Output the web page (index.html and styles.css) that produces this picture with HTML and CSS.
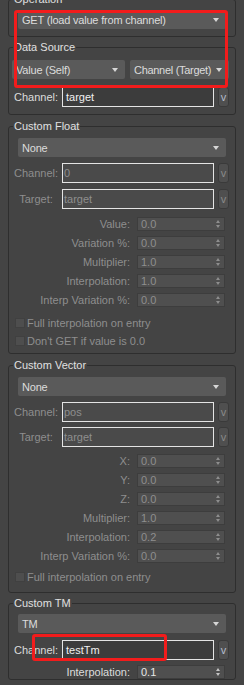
FILE: index.html
```html
<!DOCTYPE html>
<html>
<head>
    <title>Channel Operator</title>
    <link rel="stylesheet" href="styles.css">
</head>
<body>
    <div class="panel">
        <div class="group group-operation">
            <div class="group-title">Operation</div>
            <div class="dropdown wide"><span>GET (load value from channel)</span><i class="arrow"></i></div>
        </div>

        <div class="group group-source">
            <div class="group-title">Data Source</div>
            <div class="source-row">
                <div class="dropdown source-self"><span>Value (Self)</span><i class="arrow"></i></div>
                <div class="dropdown source-target"><span>Channel (Target)</span><i class="arrow"></i></div>
            </div>
            <div class="field-row">
                <label>Channel:</label>
                <div class="text-input">target</div>
                <button class="pick">v</button>
            </div>
        </div>

        <div class="group group-float">
            <div class="group-title">Custom Float</div>
            <div class="dropdown wide"><span>None</span><i class="arrow"></i></div>
            <div class="field-row disabled">
                <label>Channel:</label>
                <div class="text-input">0</div>
                <button class="pick">v</button>
            </div>
            <div class="field-row disabled">
                <label>Target:</label>
                <div class="text-input">target</div>
                <button class="pick">v</button>
            </div>
            <div class="spinners disabled">
                <div class="spin-row"><label>Value:</label><div class="spinner"><span>0.0</span><i class="updown"></i></div></div>
                <div class="spin-row"><label>Variation %:</label><div class="spinner"><span>0.0</span><i class="updown"></i></div></div>
                <div class="spin-row"><label>Multiplier:</label><div class="spinner"><span>1.0</span><i class="updown"></i></div></div>
                <div class="spin-row"><label>Interpolation:</label><div class="spinner"><span>1.0</span><i class="updown"></i></div></div>
                <div class="spin-row"><label>Interp Variation %:</label><div class="spinner"><span>0.0</span><i class="updown"></i></div></div>
            </div>
            <div class="checks disabled">
                <div class="check-row"><span class="box"></span>Full interpolation on entry</div>
                <div class="check-row"><span class="box"></span>Don't GET if value is 0.0</div>
            </div>
        </div>

        <div class="group group-vector">
            <div class="group-title">Custom Vector</div>
            <div class="dropdown wide"><span>None</span><i class="arrow"></i></div>
            <div class="field-row disabled">
                <label>Channel:</label>
                <div class="text-input">pos</div>
                <button class="pick">v</button>
            </div>
            <div class="field-row disabled">
                <label>Target:</label>
                <div class="text-input">target</div>
                <button class="pick">v</button>
            </div>
            <div class="spinners disabled">
                <div class="spin-row"><label>X:</label><div class="spinner"><span>0.0</span><i class="updown"></i></div></div>
                <div class="spin-row"><label>Y:</label><div class="spinner"><span>0.0</span><i class="updown"></i></div></div>
                <div class="spin-row"><label>Z:</label><div class="spinner"><span>0.0</span><i class="updown"></i></div></div>
                <div class="spin-row"><label>Multiplier:</label><div class="spinner"><span>1.0</span><i class="updown"></i></div></div>
                <div class="spin-row"><label>Interpolation:</label><div class="spinner"><span>0.2</span><i class="updown"></i></div></div>
                <div class="spin-row"><label>Interp Variation %:</label><div class="spinner"><span>0.0</span><i class="updown"></i></div></div>
            </div>
            <div class="checks disabled">
                <div class="check-row"><span class="box"></span>Full interpolation on entry</div>
            </div>
        </div>

        <div class="group group-tm">
            <div class="group-title">Custom TM</div>
            <div class="dropdown wide"><span>TM</span><i class="arrow"></i></div>
            <div class="field-row">
                <label>Channel:</label>
                <div class="text-input">testTm</div>
                <button class="pick">v</button>
            </div>
            <div class="spinners">
                <div class="spin-row"><label>Interpolation:</label><div class="spinner"><span>0.1</span><i class="updown"></i></div></div>
            </div>
        </div>
    </div>

    <div class="highlight highlight-source"></div>
    <div class="highlight highlight-channel"></div>
</body>
</html>
```

FILE: styles.css
```css
html, body {
    margin: 0;
    height: 685px;
    overflow: hidden;
}
body {
    background-color: #444444;
    color: #dcdcdc;
    font-family: "Liberation Sans", Arial, sans-serif;
    font-size: 11px;
    line-height: 14px;
}
.panel {
    padding: 0 8px;
    margin-top: -1px;
}
.group {
    border: 1px solid #2e2e2e;
    border-radius: 3px;
    margin-bottom: 11px;
}
.group-title {
    display: table;
    margin: -8px 0 0 4px;
    padding: 0 1px;
    background-color: #444444;
    color: #e0e0e0;
}

/* dropdowns */
.dropdown {
    display: flex;
    align-items: center;
    height: 19px;
    padding: 0 7px 0 4px;
    background-color: #5a5a5a;
    border-radius: 2px;
    white-space: nowrap;
    letter-spacing: -0.2px;
}
.dropdown.wide {
    margin: 5px 9px 0 9px;
}
.arrow {
    margin-left: auto;
    width: 0;
    height: 0;
    border-left: 3px solid transparent;
    border-right: 3px solid transparent;
    border-top: 4px solid #d6d6d6;
}
.source-row {
    display: flex;
    gap: 5px;
    padding: 0 6px 0 3px;
    margin-top: 6px;
}
.source-self {
    width: 102px;
}
.source-target {
    flex: 1;
    letter-spacing: -0.3px;
}

/* channel / target rows */
.field-row {
    display: flex;
    align-items: center;
    height: 20px;
    margin-top: 6px;
}
.field-row label {
    width: 52px;
    margin-left: 1px;
    text-align: center;
}
.text-input {
    width: 152px;
    height: 20px;
    box-sizing: border-box;
    border: 1px solid #e4e4e4;
    background-color: #3c3c3c;
    color: #f0f0f0;
    padding: 0 3px;
    line-height: 18px;
}
.pick {
    width: 11px;
    height: 20px;
    margin-left: 4px;
    padding: 0;
    border: 1px solid #3a3a3a;
    border-radius: 3px;
    background-color: #4f4f4f;
    color: #b4bccc;
    font: inherit;
    line-height: 16px;
}

/* spinners */
.spinners {
    display: flex;
    flex-direction: column;
    gap: 5px;
    margin-top: 8px;
}
.spin-row {
    display: flex;
    align-items: center;
    height: 14px;
}
.spin-row label {
    flex: 0 0 121px;
    margin-right: 7px;
    text-align: right;
}
.spinner {
    display: flex;
    align-items: center;
    width: 88px;
    height: 14px;
    box-sizing: border-box;
    padding: 0 4px 0 3px;
    background-color: #4f4f4f;
    border: 1px solid #3d3d3d;
    color: #e6e6e6;
}
.updown {
    margin-left: auto;
    display: flex;
    flex-direction: column;
    gap: 2px;
    color: #c4c4c4;
}
.updown::before,
.updown::after {
    content: "";
    width: 0;
    height: 0;
    border-left: 2px solid transparent;
    border-right: 2px solid transparent;
}
.updown::before {
    border-bottom: 3px solid currentColor;
}
.updown::after {
    border-top: 3px solid currentColor;
}

/* checkboxes */
.checks {
    margin-top: 7px;
}
.check-row {
    display: flex;
    align-items: center;
    height: 18px;
    padding-left: 6px;
}
.box {
    width: 10px;
    height: 10px;
    box-sizing: border-box;
    margin-right: 2px;
    background-color: #4e4e4e;
    border: 1px solid #404040;
}

/* disabled state */
.disabled,
.disabled .spinner {
    color: #8e8e8e;
}
.disabled .text-input {
    background-color: #4a4a4a;
    color: #8e8e8e;
    padding: 0 1px;
}
.disabled .pick {
    color: #8a8a8a;
}
.disabled .updown {
    color: #8e8e8e;
}

/* per-group spacing */
.group-operation {
    margin-bottom: 10px;
    padding-bottom: 7px;
}
.group-operation .dropdown.wide {
    margin-top: 4px;
}
.group-source {
    padding-bottom: 7px;
}
.group-source .field-row {
    margin-top: 8px;
}
.group-float {
    padding-bottom: 3px;
}
.group-vector {
    padding-bottom: 6px;
    margin-bottom: 10px;
}
.group-vector .field-row + .field-row {
    margin-top: 5px;
}
.group-vector .spinners {
    margin-top: 7px;
}
.group-vector .checks {
    margin-top: 5px;
}
.group-tm .dropdown.wide {
    margin-top: 4px;
}
.group-tm .field-row {
    margin-top: 7px;
}
.group-tm .spinners {
    margin-top: 5px;
}

/* red annotation boxes drawn over the panel */
.highlight {
    position: absolute;
    border: 3px solid #f21c1c;
    border-radius: 3px;
    box-sizing: border-box;
}
.highlight-source {
    left: 14px;
    top: 10px;
    width: 214px;
    height: 78px;
}
.highlight-channel {
    left: 32px;
    top: 634px;
    width: 135px;
    height: 27px;
}
```
